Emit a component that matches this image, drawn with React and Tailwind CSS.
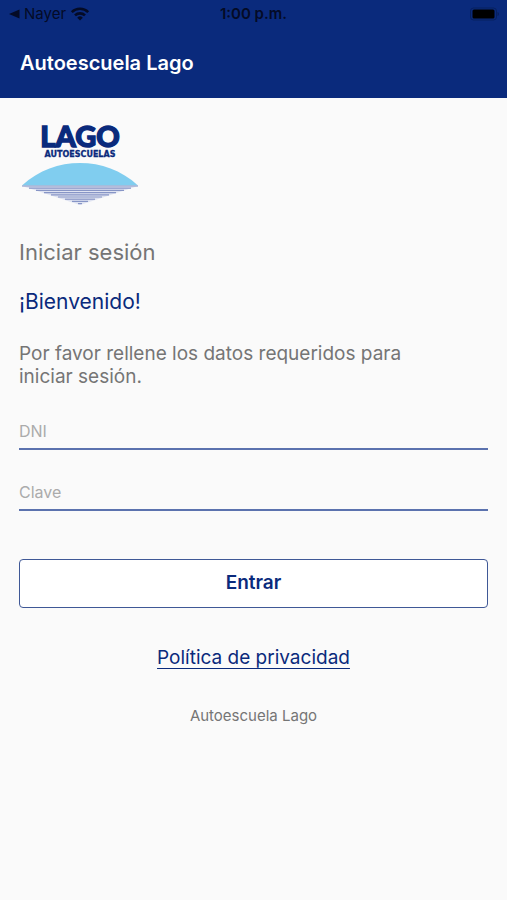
import React, { useState } from 'react';

// Water lines under the lake, widest first
const RIPPLES = [
    { y: 72, half: 58 },
    { y: 74.2, half: 51 },
    { y: 76.4, half: 44 },
    { y: 78.6, half: 36 },
    { y: 80.8, half: 29 },
    { y: 83, half: 22 },
    { y: 85.200, half: 15 },
    { y: 87.4, half: 8 },
    { y: 89.6, half: 2 }
];

const LagoLogo = () => (
    <svg width="122" height="92" viewBox="0 0 122 92" role="img" aria-label="Lago Autoescuelas" className="block">
        <text x="61" y="33" textAnchor="middle" fontSize="29" fontWeight="900" fill="#0a2a7c" stroke="#0a2a7c" strokeWidth="1.4" fontFamily="Lato, sans-serif">LAGO</text>
        <text x="61" y="43" textAnchor="middle" fontSize="8" fontWeight="700" fill="#0a2a7c" stroke="#0a2a7c" strokeWidth="0.3" fontFamily="'DejaVu Sans', sans-serif">AUTOESCUELAS</text>
        <path d="M3 71.500C20 56 40 49 61 49s41 7 58 22.500z" fill="#80cdef" />
        <path d="M3 72h116L61 91z" fill="#dfe3f1" />
        {RIPPLES.map(({ y, half }) => (
            <path key={y} d={`M${61 - half} ${y}h${half * 2}`} stroke="#8795c6" strokeWidth="1.2" />
        ))}
    </svg>
);

const StatusBar = () => (
    <div className="grid grid-cols-3 items-center h-7 px-2 text-[15px] text-[#040b26]">
        <div className="flex items-center gap-1">
            <svg width="12" height="10" viewBox="0 0 12 10" fill="currentColor">
                <path d="M1 5L11.500 0.500v9z" />
            </svg>
            <span>Nayer</span>
            <svg width="20" height="14" viewBox="0 0 20 14" fill="none" stroke="currentColor" strokeWidth="2.6">
                <path d="M1.800 5.200a11.600 11.600 0 0 1 16.400 0" />
                <path d="M5 8.400a7.100 7.100 0 0 1 10 0" />
                <path d="M10 13.600L7.200 10.700a4 4 0 0 1 5.600 0z" fill="currentColor" stroke="none" />
            </svg>
        </div>
        <span className="text-center font-semibold">1:00 p.m.</span>
        <svg width="30" height="14" viewBox="0 0 30 14" className="justify-self-end">
            <rect x="1.500" y="1" width="26" height="12" rx="3" fill="none" stroke="#07205f" strokeWidth="1" />
            <rect x="3.500" y="2.500" width="22" height="9" rx="1.500" fill="#000" />
            <path d="M28.500 5v4c1-.3 1.500-1 1.500-2s-.5-1.700-1.500-2z" fill="#07205f" />
        </svg>
    </div>
);

const Field = ({ label, type, value, onChange }) => (
    <input
        type={type}
        value={value}
        aria-label={label}
        placeholder={label}
        onChange={(e) => onChange(e.target.value)}
        className="block w-full h-9 border-b-2 border-[#5b72ae] bg-transparent text-base text-gray-700 placeholder-[#ababab] outline-none"
    />
);

const App = () => {
    const [dni, setDni] = useState('');
    const [clave, setClave] = useState('');

    return (
        <div className="min-h-screen bg-[#fafafa] font-[Inter,sans-serif] text-[#757575]">
            <header className="bg-[#0a2a7c]">
                <StatusBar />
                <h1 className="px-5 py-5 text-xl leading-[30px] font-semibold text-white">Autoescuela Lago</h1>
            </header>

            <main className="px-[19px] pt-4">
                <LagoLogo />
                <h2 className="mt-8 text-[22px] leading-7">Iniciar sesión</h2>
                <p className="mt-[22px] text-[21px] leading-7 text-[#0a2a7c]">¡Bienvenido!</p>
                <p className="mt-[26px] pr-16 text-[19px] leading-[23px]">Por favor rellene los datos requeridos para iniciar sesión.</p>

                <form onSubmit={(e) => e.preventDefault()}>
                    <div className="mt-[26px] flex flex-col gap-[25px]">
                        <Field label="DNI" type="text" value={dni} onChange={setDni} />
                        <Field label="Clave" type="password" value={clave} onChange={setClave} />
                    </div>
                    <button
                        type="submit"
                        className="mt-12 w-full h-[49px] rounded border border-[#3f5896] bg-white text-[19px] font-semibold text-[#0a2a7c]"
                    >
                        Entrar
                    </button>
                </form>

                <div className="mt-9 text-center">
                    <a href="#privacidad" className="text-[19px] leading-7 text-[#0a2a7c] underline underline-offset-4">Política de privacidad</a>
                </div>
                <p className="mt-8 text-center text-[15px] leading-6">Autoescuela Lago</p>
            </main>
        </div>
    );
};

export default App;
